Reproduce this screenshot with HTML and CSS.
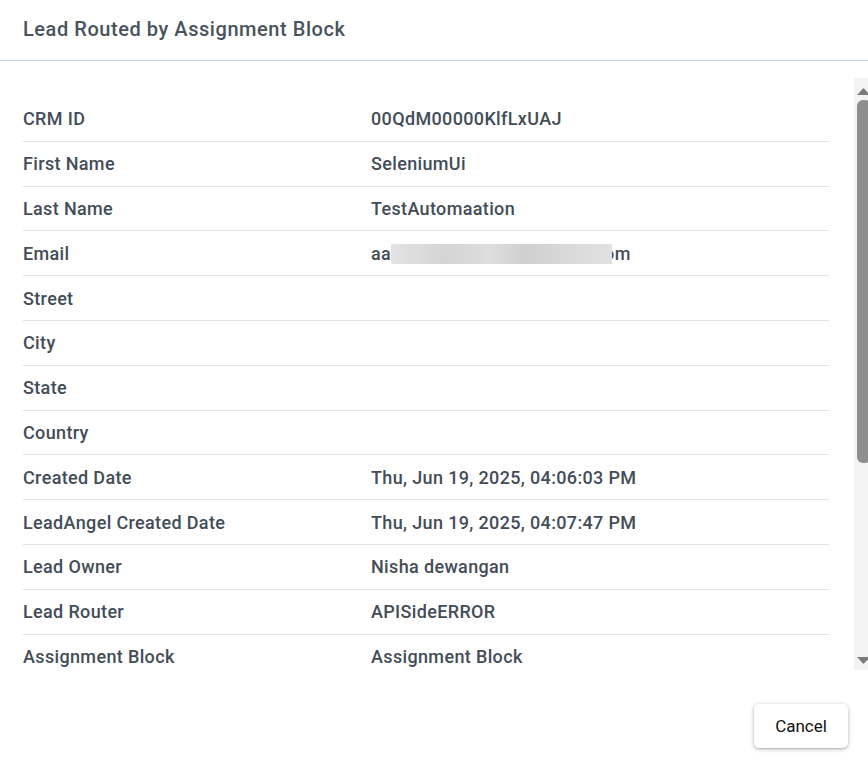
FILE: index.html
```html
<!DOCTYPE html>
<html lang="en">
<head>
<meta charset="utf-8">
<title>Lead Routed by Assignment Block</title>
<link rel="stylesheet" href="styles.css">
</head>
<body>
<div class="dialog">
  <div class="dialog-header">
    <h2 class="dialog-title">Lead Routed by Assignment Block</h2>
  </div>
  <div class="dialog-body">
    <div class="detail-list">
      <div class="detail-row"><span class="label">CRM ID</span><span class="value">00QdM00000KlfLxUAJ</span></div>
      <div class="detail-row"><span class="label">First Name</span><span class="value">SeleniumUi</span></div>
      <div class="detail-row"><span class="label">Last Name</span><span class="value">TestAutomaation</span></div>
      <div class="detail-row"><span class="label">Email</span><span class="value">aa<span class="masked"></span><span class="masked-tail">om</span></span></div>
      <div class="detail-row"><span class="label">Street</span><span class="value"></span></div>
      <div class="detail-row"><span class="label">City</span><span class="value"></span></div>
      <div class="detail-row"><span class="label">State</span><span class="value"></span></div>
      <div class="detail-row"><span class="label">Country</span><span class="value"></span></div>
      <div class="detail-row"><span class="label">Created Date</span><span class="value">Thu, Jun 19, 2025, 04:06:03 PM</span></div>
      <div class="detail-row"><span class="label">LeadAngel Created Date</span><span class="value">Thu, Jun 19, 2025, 04:07:47 PM</span></div>
      <div class="detail-row"><span class="label">Lead Owner</span><span class="value">Nisha dewangan</span></div>
      <div class="detail-row"><span class="label">Lead Router</span><span class="value">APISideERROR</span></div>
      <div class="detail-row"><span class="label">Assignment Block</span><span class="value">Assignment Block</span></div>
    </div>
    <div class="scrollbar" aria-hidden="true">
      <div class="scroll-btn scroll-btn-up">
        <svg class="arrow" width="16" height="10" viewBox="0 0 16 10"><polygon points="3,9 9.5,2 16,9" fill="#7a7a7a"/></svg>
      </div>
      <div class="scroll-track">
        <div class="scroll-thumb"></div>
      </div>
      <div class="scroll-btn scroll-btn-down">
        <svg class="arrow" width="16" height="10" viewBox="0 0 16 10"><polygon points="3,1 16,1 9.5,8" fill="#7a7a7a"/></svg>
      </div>
    </div>
  </div>
  <div class="dialog-footer">
    <button class="btn-cancel" type="button">Cancel</button>
  </div>
</div>
</body>
</html>
```
FILE: styles.css
```css
* {
  box-sizing: border-box;
}

html, body {
  margin: 0;
  padding: 0;
  background: #ffffff;
}

body {
  font-family: Roboto, "Noto Sans", Arial, sans-serif;
  color: #434d57;
}

.dialog {
  width: 868px;
  height: 769px;
  display: flex;
  flex-direction: column;
  background: #ffffff;
  overflow: hidden;
}

.dialog-header {
  height: 61px;
  flex: none;
  display: flex;
  align-items: center;
  padding: 0 23px 2px;
  border-bottom: 1px solid #b6d2da;
}

.dialog-title {
  margin: 0;
  font-size: 20px;
  font-weight: 500;
  letter-spacing: 0.55px;
  color: #49535c;
}

.dialog-body {
  flex: none;
  margin-top: 17px;
  height: 592px;
  display: flex;
}

.detail-list {
  flex: 1;
  min-width: 0;
  overflow: hidden;
  display: flex;
  flex-direction: column;
  padding: 19px 25px 0 23px;
}

.detail-row {
  flex: none;
  display: grid;
  grid-template-columns: 348px 1fr;
  align-items: center;
  height: 44.8px;
  border-bottom: 1px solid #dce6ec;
  font-size: 18px;
  font-weight: 500;
  letter-spacing: 0.35px;
}

.label,
.value {
  white-space: nowrap;
}

/* privacy mask laid over part of the address */
.masked {
  position: relative;
  z-index: 1;
  display: inline-block;
  width: 221px;
  height: 20px;
  vertical-align: -4px;
  background: linear-gradient(90deg, #e3e3e3 0%, #d4d4d4 25%, #dedede 45%, #cfcfcf 60%, #d9d9d9 80%, #e1e1e1 100%);
  filter: blur(0.5px);
}

.masked-tail {
  margin-left: -8px;
}

/* vertical scrollbar of the detail list, clipped by the window edge */
.scrollbar {
  flex: none;
  width: 14px;
  display: flex;
  flex-direction: column;
  background: #f3f3f3;
  overflow: hidden;
}

.scroll-btn {
  flex: none;
  height: 18px;
  display: flex;
}

.scroll-btn-up {
  align-items: flex-end;
}

.scroll-btn-down {
  align-items: center;
}

.arrow {
  flex: none;
  display: block;
}

.scroll-track {
  flex: 1;
  padding-top: 4px;
}

.scroll-thumb {
  margin-left: 3px;
  width: 14px;
  height: 363px;
  border-radius: 6px;
  background: #8e8e8e;
}

.dialog-footer {
  flex: 1;
  display: flex;
  justify-content: flex-end;
  align-items: flex-start;
  padding: 34px 20px 0 0;
}

.btn-cancel {
  width: 94px;
  height: 44px;
  border: none;
  border-radius: 5px;
  background: #ffffff;
  box-shadow: 0 1px 4px rgba(0, 0, 0, 0.28), 0 1px 1px rgba(0, 0, 0, 0.12);
  font-family: Roboto, "Noto Sans", Arial, sans-serif;
  font-size: 17px;
  font-weight: 400;
  color: #111111;
  cursor: pointer;
}
```
